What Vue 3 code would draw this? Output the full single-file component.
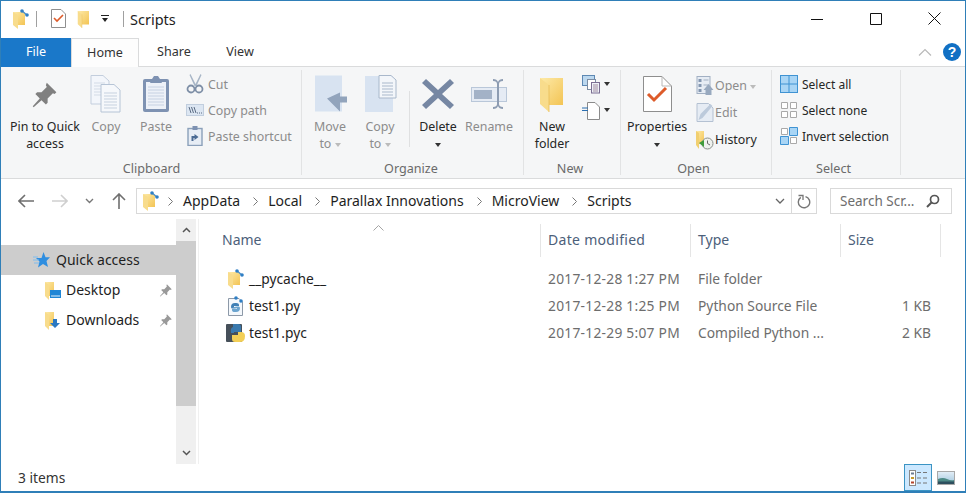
<script setup>
const crumbs = ['AppData', 'Local', 'Parallax Innovations', 'MicroView', 'Scripts']

const columns = ['Date modified', 'Type', 'Size']

const files = [
  { icon: 'folder', name: '__pycache__', date: '2017-12-28 1:27 PM', type: 'File folder', size: '' },
  { icon: 'py', name: 'test1.py', date: '2017-12-28 1:25 PM', type: 'Python Source File', size: '1 KB' },
  { icon: 'pyc', name: 'test1.pyc', date: '2017-12-29 5:07 PM', type: 'Compiled Python ...', size: '2 KB' }
]
</script>

<template>
  <div class="window">
    <svg class="defs" width="0" height="0">
      <defs>
        <linearGradient id="fold" x1="0" y1="0" x2="1" y2="1">
          <stop offset="0" stop-color="#fdeaa8" />
          <stop offset="1" stop-color="#f3c454" />
        </linearGradient>
        <linearGradient id="sky" x1="0" y1="0" x2="0" y2="1">
          <stop offset="0" stop-color="#e4eff7" />
          <stop offset="1" stop-color="#9cc3dc" />
        </linearGradient>
        <symbol id="folder" viewBox="0 0 24 36">
          <path d="M0 2H23V29H9Z" fill="url(#fold)" />
          <path d="M0 2L9 9V36L0 28Z" fill="#f8dc8c" />
          <path d="M9 9V36" stroke="#e9bd55" stroke-width=".8" />
        </symbol>
        <symbol id="qa-folder" viewBox="0 0 18 20">
          <path d="M1 3H13V16H6Z" fill="url(#fold)" />
          <path d="M1 3L6 6V20L1 16Z" fill="#f8dc8c" />
          <path d="M9.500 1.500L15.500 6.500" stroke="#4f93cc" stroke-width="1.500" />
          <circle cx="10" cy="2" r="1.800" fill="#2f7fc4" />
          <circle cx="15" cy="6" r="1.800" fill="#2f7fc4" />
        </symbol>
      </defs>
    </svg>

    <div class="titlebar">
      <svg class="t-folder" width="18" height="20" viewBox="0 0 18 20"><use href="#qa-folder" /></svg>
      <span class="t-sep first"></span>
      <svg class="t-check" width="15" height="19" viewBox="0 0 15 19">
        <path d="M.5.5H10L14.500 5V18.500H.5Z" fill="#fff" stroke="#8f8f8f" />
        <path d="M3 9l3 3 6-6" fill="none" stroke="#dd5b2a" stroke-width="1.600" />
      </svg>
      <svg class="t-small-folder" width="13" height="18" viewBox="0 0 24 36"><use href="#folder" /></svg>
      <svg class="t-drop" width="8" height="7" viewBox="0 0 8 7">
        <path d="M0 0H8V1H0ZM1 3H7L4 7Z" fill="#222" />
      </svg>
      <span class="t-sep"></span>
      <span class="t-title">Scripts</span>
      <div class="controls">
        <svg width="12" height="12" viewBox="0 0 12 12"><path d="M0 6.500H12" stroke="#111" /></svg>
        <svg width="12" height="12" viewBox="0 0 12 12"><path d="M.5.5H11.500V11.500H.5Z" fill="none" stroke="#111" /></svg>
        <svg width="13" height="13" viewBox="0 0 13 13"><path d="M.5.5L12.500 12.500M12.500.5L.5 12.500" stroke="#111" /></svg>
      </div>
    </div>

    <div class="tabs">
      <div class="tab file">File</div>
      <div class="tab active">Home</div>
      <div class="tab share">Share</div>
      <div class="tab view-tab">View</div>
      <svg class="collapse" width="14" height="8" viewBox="0 0 14 8">
        <path d="M1 7.500L7 1.500 13 7.500" fill="none" stroke="#b9b9b9" stroke-width="1.200" />
      </svg>
      <div class="help">?</div>
    </div>

    <div class="ribbon">
      <section class="group clipboard">
        <div class="tools">
          <div class="big pin">
            <svg class="ico" width="28" height="32" viewBox="0 0 32 32">
              <path d="M18 3l11 11-2 2-2-1-6 6 0 5-2 2-5-5-9 8-1-1 8-9-5-5 2-2 5 0 6-6-1-2z" fill="#808080" />
            </svg>
            <span class="dark">Pin to Quick<br />access</span>
          </div>
          <div class="big copy">
            <svg class="ico" width="32" height="38" viewBox="0 0 32 38">
              <path d="M1 .5H13L19 6V29H1Z" fill="#f3f6fb" stroke="#c3cedd" />
              <path d="M4 8H15M4 11H15M4 14H15M4 17H15M4 20H15" stroke="#d3dbe6" />
              <path d="M11 9.500H24L30 15V37H11Z" fill="#f6f8fb" stroke="#b6c4d6" />
              <path d="M14 18H27M14 21H27M14 24H27M14 27H27M14 30H27M14 33H27" stroke="#c6d1df" />
            </svg>
            <span>Copy</span>
          </div>
          <div class="big paste">
            <svg class="ico" width="28" height="38" viewBox="0 0 28 38">
              <rect x="1" y="4" width="26" height="33" rx="2" fill="#7e92b2" />
              <rect x="4" y="7" width="20" height="27" fill="#edf1f8" />
              <path d="M6 12H22M6 15H22M6 18H22M6 21H22M6 24H22M6 27H22M6 30H22" stroke="#c6d1e2" />
              <path d="M10 4L12 1H16L18 4 20 8H8Z" fill="#7e92b2" />
            </svg>
            <span>Paste</span>
          </div>
          <div class="list">
            <div class="row">
              <svg width="17" height="20" viewBox="0 0 17 20">
                <path d="M4 0L9 10 14 0 15 1 10 12 8 12 3 1Z" fill="#a7b5c6" />
                <circle cx="4.500" cy="15" r="3.500" fill="none" stroke="#7d8ea6" stroke-width="1.800" />
                <circle cx="12.500" cy="15" r="3.500" fill="none" stroke="#7d8ea6" stroke-width="1.800" />
              </svg>
              <span>Cut</span>
            </div>
            <div class="row">
              <svg width="18" height="12" viewBox="0 0 18 12">
                <rect x=".5" y=".5" width="17" height="11" fill="#dce6f2" stroke="#c1cede" />
                <path d="M3 3L5 9M5.500 3L7.500 9M8 3L10 9" stroke="#5a6b83" fill="none" />
                <path d="M11 9H12M13 9H14M15 9H16" stroke="#5a6b83" />
              </svg>
              <span>Copy path</span>
            </div>
            <div class="row">
              <svg width="15" height="20" viewBox="0 0 15 20">
                <rect x=".5" y="2.500" width="14" height="17" fill="#e7edf5" stroke="#8ba0ba" stroke-width="1.400" />
                <rect x="5" y="0" width="5" height="4" fill="#7e92b2" />
                <path d="M4 15V10H7V8L11 11 7 14V12H6V15Z" fill="#4a6a94" />
              </svg>
              <span>Paste shortcut</span>
            </div>
          </div>
        </div>
        <div class="label">Clipboard</div>
      </section>

      <section class="group organize">
        <div class="tools">
          <div class="big move">
            <svg class="ico" width="33" height="37" viewBox="0 0 33 37">
              <rect x="1" y="0" width="27" height="36" fill="#d8e3f1" />
              <path d="M13 23L26 17V21H33V27H26V36Z" fill="#92a4bc" />
            </svg>
            <span>Move<br />to <i class="caret light"></i></span>
          </div>
          <div class="big copy-to">
            <svg class="ico" width="33" height="38" viewBox="0 0 33 38">
              <rect x="1" y="1" width="28" height="36" fill="#d8e3f1" />
              <path d="M15 .5H27L32 5V23H15Z" fill="#f3f6fa" stroke="#a9b8cb" />
              <path d="M18 8H29M18 11H29M18 14H29M18 17H29M18 20H29" stroke="#a9b8cb" />
            </svg>
            <span>Copy<br />to <i class="caret light"></i></span>
          </div>
          <span class="inner-sep"></span>
          <div class="big delete">
            <svg class="ico" width="32" height="32" viewBox="0 0 32 32">
              <path d="M4 1L16 12 28 1 32 5 20 16 32 27 28 31 16 20 4 31 0 27 12 16 0 5Z" fill="#7687a3" />
            </svg>
            <span class="dark">Delete<br /><i class="caret"></i></span>
          </div>
          <div class="big rename">
            <svg class="ico" width="36" height="32" viewBox="0 0 36 32">
              <rect x=".5" y="9.500" width="35" height="14" fill="#e5ebf4" stroke="#b9c7d9" />
              <rect x="3" y="12" width="18" height="9" fill="#a3b2c7" />
              <path d="M22 1Q26 1 27 4 28 1 32 1V3Q28 3 28 6V26Q28 29 32 29V31Q28 31 27 28 26 31 22 31V29Q26 29 26 26V6Q26 3 22 3Z" fill="#8d9cb2" />
            </svg>
            <span>Rename</span>
          </div>
        </div>
        <div class="label">Organize</div>
      </section>

      <section class="group new">
        <div class="tools">
          <div class="big new-folder">
            <svg class="ico" width="24" height="36" viewBox="0 0 24 36"><use href="#folder" /></svg>
            <span class="dark">New<br />folder</span>
          </div>
          <div class="mini">
            <div class="mini-row">
              <svg width="19" height="19" viewBox="0 0 19 19">
                <rect x=".5" y=".5" width="12" height="10" fill="#bcd8ef" stroke="#5d88b3" />
                <rect x="5.500" y="4.500" width="8" height="10" fill="#fff" stroke="#7c8da3" />
                <rect x="9.500" y="7.500" width="8" height="10.500" fill="#eef2f8" stroke="#7c6f93" />
                <path d="M11 10H16M11 12H16M11 14H16M11 16H16" stroke="#a08b9f" />
              </svg>
              <i class="caret"></i>
            </div>
            <div class="mini-row">
              <svg width="19" height="19" viewBox="0 0 19 19">
                <path d="M5.500 1.500H13L17.500 6V18.500H5.500Z" fill="#fff" stroke="#8b8b8b" />
                <path d="M0 7H6M0 9.500H6" stroke="#2b6fb0" />
              </svg>
              <i class="caret"></i>
            </div>
          </div>
        </div>
        <div class="label">New</div>
      </section>

      <section class="group open">
        <div class="tools">
          <div class="big properties">
            <svg class="ico" width="29" height="36" viewBox="0 0 29 36">
              <path d="M.5.5H19L28.500 10V35.500H.5Z" fill="#fff" stroke="#8e8e8e" />
              <path d="M19 .5V10H28.500" fill="none" stroke="#b8b8b8" />
              <path d="M5 18L11 24 23 12" fill="none" stroke="#dd5b2a" stroke-width="3" />
            </svg>
            <span class="dark">Properties<br /><i class="caret"></i></span>
          </div>
          <div class="list">
            <div class="row">
              <svg width="17" height="19" viewBox="0 0 17 19">
                <rect x=".5" y=".5" width="13" height="17" fill="#e6ecf4" stroke="#a2b0c3" />
                <path d="M2 3H5V6H2ZM2 8H5V11H2ZM2 13H5V16H2Z" fill="#8497b1" />
                <path d="M7 4H12M7 9H12" stroke="#a2b0c3" />
                <path d="M7 14L12 8 17 14H15V19H9V14Z" fill="#98a9bf" />
              </svg>
              <span>Open <i class="caret light"></i></span>
            </div>
            <div class="row">
              <svg width="17" height="19" viewBox="0 0 17 19">
                <path d="M.5.5H12L16.500 5V18.500H.5Z" fill="#e6ecf4" stroke="#b4c1d2" />
                <path d="M2 17L4 11 14 1 16 3 6 15Z" fill="#bccadb" />
              </svg>
              <span>Edit</span>
            </div>
            <div class="row">
              <svg width="18" height="20" viewBox="0 0 18 20">
                <path d="M0 1H8V14H3Z" fill="url(#fold)" />
                <path d="M0 1L3 3V19L0 15Z" fill="#f1cf70" />
                <circle cx="11.500" cy="13.500" r="5.500" fill="#eef1ee" stroke="#8a8f8a" />
                <path d="M11.500 10.500V13.500L14 15" fill="none" stroke="#666" />
                <path d="M3 13L8 10V17Z" fill="#3f9b3c" />
              </svg>
              <span class="dark">History</span>
            </div>
          </div>
        </div>
        <div class="label">Open</div>
      </section>

      <section class="group select">
        <div class="tools">
          <div class="list">
            <div class="row">
              <svg width="18" height="18" viewBox="0 0 18 18">
                <rect x=".5" y=".5" width="17" height="17" fill="#a9d5f5" stroke="#3f93d3" />
                <path d="M9 0V18M0 9H18" stroke="#3f93d3" />
              </svg>
              <span class="dark">Select all</span>
            </div>
            <div class="row">
              <svg width="18" height="18" viewBox="0 0 18 18">
                <path d="M1.500 1.500H7.500V7.500H1.500ZM10.500 1.500H16.500V7.500H10.500ZM1.500 10.500H7.500V16.500H1.500ZM10.500 10.500H16.500V16.500H10.500Z" fill="#fff" stroke="#a9a9a9" />
              </svg>
              <span class="dark">Select none</span>
            </div>
            <div class="row">
              <svg width="18" height="18" viewBox="0 0 18 18">
                <path d="M1.500 1.500H7.500V7.500H1.500ZM10.500 10.500H16.500V16.500H10.500Z" fill="#fff" stroke="#a9a9a9" />
                <path d="M9.500.5H17.500V8.500H9.500ZM.5 9.500H8.500V17.500H.5Z" fill="#a9d5f5" stroke="#3f93d3" />
              </svg>
              <span class="dark">Invert selection</span>
            </div>
          </div>
        </div>
        <div class="label">Select</div>
      </section>
    </div>

    <div class="navbar">
      <div class="arrows">
        <svg width="16" height="14" viewBox="0 0 16 14"><path d="M7 1L1 7 7 13M1 7H16" fill="none" stroke="#6f6f6f" stroke-width="1.600" /></svg>
        <svg width="16" height="14" viewBox="0 0 16 14"><path d="M9 1L15 7 9 13M15 7H0" fill="none" stroke="#cfcfcf" stroke-width="1.600" /></svg>
        <svg width="9" height="6" viewBox="0 0 9 6"><path d="M1 1L4.500 4.500 8 1" fill="none" stroke="#777" stroke-width="1.400" /></svg>
        <svg width="14" height="16" viewBox="0 0 14 16"><path d="M1 7L7 1 13 7M7 1V16" fill="none" stroke="#6f6f6f" stroke-width="1.600" /></svg>
      </div>
      <div class="address">
        <svg class="crumb-icon" width="18" height="20" viewBox="0 0 18 20"><use href="#qa-folder" /></svg>
        <template v-for="c in crumbs" :key="c">
          <svg class="chev" width="5" height="9" viewBox="0 0 5 9"><path d="M.5.5L4.500 4.500 .5 8.500" fill="none" stroke="#777" /></svg>
          <span class="crumb">{{ c }}</span>
        </template>
        <svg class="addr-drop" width="10" height="6" viewBox="0 0 10 6"><path d="M1 1L5 5 9 1" fill="none" stroke="#666" stroke-width="1.300" /></svg>
        <div class="refresh">
          <svg width="14" height="15" viewBox="0 0 14 15">
            <path d="M8.500 2.600A5.700 5.700 0 1 1 3.800 3.400" fill="none" stroke="#777" stroke-width="1.400" />
            <path d="M1.500 1.500H6V6" fill="none" stroke="#777" stroke-width="1.300" />
          </svg>
        </div>
      </div>
      <div class="search">
        <span>Search Scr...</span>
        <svg width="14" height="14" viewBox="0 0 14 14">
          <circle cx="8.500" cy="5.500" r="4" fill="none" stroke="#555" stroke-width="1.700" />
          <path d="M5.500 8.500L1 13" stroke="#555" stroke-width="2" />
        </svg>
      </div>
    </div>

    <div class="main">
      <aside class="sidebar">
        <div class="tree">
          <div class="node selected">
            <svg width="17" height="16" viewBox="0 0 17 16">
              <path d="M10.500 0L12.500 5.200H17L13.500 9 15 15 10 12 5 15.500 6.500 9.500 3 6H8.500Z" fill="#2f8ee0" />
              <path d="M0 5H5M0 8H6M1 11H6" stroke="#7fbcee" />
            </svg>
            <span>Quick access</span>
          </div>
          <div class="node sub">
            <svg width="17" height="19" viewBox="0 0 17 19">
              <path d="M1 1H10V15H5Z" fill="url(#fold)" />
              <path d="M1 1L5 4V19L1 15Z" fill="#f8dc8c" />
              <rect x="6" y="9" width="11" height="8" fill="#1f86d6" />
              <path d="M7 15H16" stroke="#e4f1fb" />
            </svg>
            <span>Desktop</span>
            <svg class="pinned" width="14" height="14" viewBox="0 0 32 32">
              <path d="M18 3l11 11-2 2-2-1-6 6 0 5-2 2-5-5-9 8-1-1 8-9-5-5 2-2 5 0 6-6-1-2z" fill="#999" />
            </svg>
          </div>
          <div class="node sub">
            <svg width="17" height="19" viewBox="0 0 17 19">
              <path d="M1 1H10V15H5Z" fill="url(#fold)" />
              <path d="M1 1L5 4V19L1 15Z" fill="#f8dc8c" />
              <path d="M9 8H13V12H16L11 17 6 12H9Z" fill="#2b78c2" />
            </svg>
            <span>Downloads</span>
            <svg class="pinned" width="14" height="14" viewBox="0 0 32 32">
              <path d="M18 3l11 11-2 2-2-1-6 6 0 5-2 2-5-5-9 8-1-1 8-9-5-5 2-2 5 0 6-6-1-2z" fill="#999" />
            </svg>
          </div>
        </div>
        <div class="scrollbar">
          <div class="sb-btn">
            <svg width="9" height="6" viewBox="0 0 9 6"><path d="M1 5L4.500 1.500 8 5" fill="none" stroke="#555" stroke-width="1.500" /></svg>
          </div>
          <div class="thumb"></div>
          <div class="track"></div>
          <div class="sb-btn">
            <svg width="9" height="6" viewBox="0 0 9 6"><path d="M1 1L4.500 4.500 8 1" fill="none" stroke="#555" stroke-width="1.500" /></svg>
          </div>
        </div>
      </aside>

      <div class="content">
        <div class="header">
          <div class="col-name">
            Name
            <svg class="sort" width="11" height="6" viewBox="0 0 11 6"><path d="M.5 5.500L5.500 .5 10.500 5.500" fill="none" stroke="#a5a5a5" /></svg>
          </div>
          <div v-for="c in columns" :key="c" class="col">{{ c }}</div>
        </div>
        <div class="rows">
          <div v-for="f in files" :key="f.name" class="file-row">
            <div class="cell-name">
              <svg v-if="f.icon === 'folder'" width="18" height="20" viewBox="0 0 18 20"><use href="#qa-folder" /></svg>
              <svg v-else-if="f.icon === 'py'" width="18" height="20" viewBox="0 0 18 20">
                <path d="M1.500 2.500H12L15.500 6V19.500H1.500Z" fill="#f4f8fc" stroke="#8d99a8" />
                <path d="M4 11Q4 7 8 7 12 6.500 12 9V10H7V11H12Q9 13 6 12.500 4 13 4 11Z" fill="#3f7fb5" />
                <path d="M13 12Q13 16 9 16 5 16.500 5 14V13H10V12H5Q8 10 11 10.500 13 10 13 12Z" fill="#6ba4cf" />
                <circle cx="9" cy="2" r="1.800" fill="#2f7fc4" />
                <circle cx="14" cy="5" r="1.800" fill="#2f7fc4" />
              </svg>
              <svg v-else width="20" height="20" viewBox="0 0 20 20">
                <rect x="0" y="1" width="16" height="18" rx="1" fill="#46505a" />
                <path d="M7 1H12Q15 1 15 4V9H8V10H5Q4 5 7 4Z" fill="#3a79ad" />
                <path d="M6 12H12V9H15Q19 9 19 13 19 19 14 19H9Q6 19 6 16Z" fill="#f3cf56" />
              </svg>
              <span>{{ f.name }}</span>
            </div>
            <div class="cell date">{{ f.date }}</div>
            <div class="cell type">{{ f.type }}</div>
            <div class="cell size">{{ f.size }}</div>
          </div>
        </div>
      </div>
    </div>

    <div class="status">
      <span>3 items</span>
      <div class="views">
        <div class="view on">
          <svg width="18" height="16" viewBox="0 0 18 16">
            <rect x=".5" y=".5" width="6" height="15" fill="#fff" stroke="#8a8a8a" />
            <path d="M2 2.500H5V4.500H2Z" fill="#6c7c92" />
            <path d="M2 7H5V9H2Z" fill="#c49a2c" />
            <path d="M2 11.500H5V13.500H2Z" fill="#b4442c" />
            <path d="M8 2.500H12M14 2.500H18M8 8H12M14 8H18M8 13H12M14 13H18" stroke="#777" />
          </svg>
        </div>
        <div class="view">
          <svg width="18" height="14" viewBox="0 0 18 14">
            <rect x=".5" y=".5" width="17" height="13" fill="url(#sky)" stroke="#a8a8a8" />
            <path d="M1 8Q6 6 10 8T17 9V13H1Z" fill="#4d8a86" />
            <path d="M1 10.500H17V13H1Z" fill="#2d4f5e" />
          </svg>
        </div>
      </div>
    </div>
  </div>
</template>

<style>
html,
body {
  margin: 0;
  background: #fff;
}
</style>

<style scoped>
.window {
  width: 966px;
  height: 493px;
  box-sizing: border-box;
  border: 1px solid #2f7fb8;
  border-bottom-width: 2px;
  display: flex;
  flex-direction: column;
  overflow: hidden;
  background: #fff;
  font-family: "Noto Sans", sans-serif;
  font-size: 13.8px;
  color: #1e1e1e;
}
.defs {
  position: absolute;
}

/* title bar */
.titlebar {
  height: 37px;
  flex: none;
  display: flex;
  align-items: center;
  box-sizing: border-box;
  padding-bottom: 2px;
}
.t-folder {
  margin-left: 11px;
}
.t-sep {
  width: 1px;
  height: 16px;
  background: #a0a0a0;
  margin-left: 14px;
}
.t-sep.first {
  margin-left: 6px;
  margin-right: 14px;
}
.t-small-folder {
  margin-left: 11px;
}
.t-drop {
  margin-left: 11px;
}
.t-title {
  margin-left: 6px;
  font-size: 14.5px;
}
.controls {
  margin-left: auto;
  width: 130px;
  margin-right: 24px;
  display: flex;
  justify-content: space-between;
  align-items: center;
}

/* tabs */
.tabs {
  height: 29px;
  flex: none;
  display: flex;
  align-items: stretch;
  box-sizing: border-box;
  border-bottom: 1px solid #dadbdc;
}
.tab {
  width: 68px;
  display: flex;
  align-items: center;
  justify-content: center;
  box-sizing: border-box;
  padding-bottom: 2px;
  color: #333;
  font-size: 12.6px;
}
.tab.share {
  width: 70px;
}
.tab.view-tab {
  width: 62px;
}
.tab.file {
  width: 70px;
  background: #1a78c9;
  color: #fff;
  margin-bottom: -1px;
}
.tab.active {
  background: #fdfdfd;
  border: 1px solid #dadbdc;
  border-bottom: none;
  margin-bottom: -1px;
}
.collapse {
  margin-left: auto;
  align-self: center;
}
.help {
  align-self: center;
  width: 18px;
  height: 18px;
  margin: 0 4px 0 11px;
  border-radius: 50%;
  background: #1170c4;
  color: #fff;
  font: bold 14px/18px "Liberation Sans", sans-serif;
  text-align: center;
}

/* ribbon */
.ribbon {
  height: 112px;
  flex: none;
  box-sizing: border-box;
  display: flex;
  background: #f5f6f7;
  border-bottom: 1px solid #dadbdc;
  color: #8c8c8c;
  line-height: 17px;
  font-size: 12.4px;
}
.group {
  box-sizing: border-box;
  padding: 3px 0 0;
  display: flex;
  flex-direction: column;
  position: relative;
}
.group::after {
  content: "";
  position: absolute;
  right: 0;
  top: 3px;
  bottom: 3px;
  width: 1px;
  background: #e2e3e4;
}
.clipboard {
  width: 301px;
}
.organize {
  width: 222px;
}
.new {
  width: 97px;
}
.open {
  width: 151px;
}
.select {
  width: 129px;
}
.tools {
  flex: 1;
  display: flex;
}
.label {
  text-align: center;
  color: #6a6a6a;
  height: 19px;
  line-height: 19px;
  font-size: 12.6px;
}
.organize .label {
  padding-right: 4px;
}
.new .label {
  padding-right: 5px;
}
.open .label {
  padding-right: 6px;
}
.select .label {
  padding-right: 6px;
}
.big {
  display: flex;
  flex-direction: column;
  align-items: center;
  text-align: center;
  flex: none;
}
.ico {
  height: 38px;
  margin: 5px 0 5px;
  flex: none;
}
.dark {
  color: #262626;
}
.pin {
  width: 88px;
}
.copy {
  width: 34px;
}
.paste {
  width: 50px;
  margin-left: 8px;
}
.clipboard .list {
  margin-left: 5px;
}
.clipboard .row {
  gap: 4px;
}
.list {
  display: flex;
  flex-direction: column;
  padding-top: 1px;
}
.row {
  height: 26px;
  display: flex;
  align-items: center;
  gap: 5px;
  white-space: nowrap;
}
.row svg {
  flex: none;
  width: 18px;
}
.organize .tools {
  padding-left: 3px;
}
.move {
  width: 50px;
}
.copy-to {
  width: 50px;
}
.inner-sep {
  width: 1px;
  height: 56px;
  margin: 21px 3px 0 4px;
  background: #dfe0e1;
}
.delete {
  width: 50px;
}
.rename {
  width: 52px;
}
.new .tools {
  padding-left: 2px;
}
.new-folder {
  width: 52px;
}
.mini {
  margin-left: 4px;
  padding-top: 1px;
}
.mini-row {
  height: 26px;
  display: flex;
  align-items: center;
  gap: 3px;
}
.properties {
  width: 72px;
}
.open .list {
  margin-left: 3px;
  padding-top: 2px;
}
.open .list .row {
  gap: 1px;
  height: 27px;
}
.select .list {
  margin-left: 8px;
  font-size: 12px;
}
.select .row {
  gap: 4px;
}
.caret {
  display: inline-block;
  width: 0;
  height: 0;
  vertical-align: middle;
  border: 3.5px solid transparent;
  border-top: 4px solid #333;
  border-bottom: none;
}
.caret.light {
  border-top-color: #bbb;
}

/* address row */
.navbar {
  height: 40px;
  flex: none;
  display: flex;
  align-items: center;
  padding-top: 4px;
  box-sizing: border-box;
}
.arrows {
  width: 135px;
  box-sizing: border-box;
  padding: 0 10px 0 17px;
  display: flex;
  justify-content: space-between;
  align-items: center;
}
.address {
  width: 681px;
  height: 26px;
  box-sizing: border-box;
  border: 1px solid #d9d9d9;
  display: flex;
  align-items: center;
  padding-left: 5px;
  font-size: 14px;
}
.crumb-icon {
  margin-right: 5px;
}
.chev {
  margin: 0 10px 0 3px;
}
.crumb {
  margin-right: 10px;
  padding-bottom: 2px;
}
.addr-drop {
  margin-left: auto;
  margin-right: 6px;
}
.refresh {
  width: 24px;
  height: 100%;
  border-left: 1px solid #d9d9d9;
  display: flex;
  align-items: center;
  justify-content: center;
}
.search {
  width: 122px;
  height: 26px;
  margin-left: 13px;
  box-sizing: border-box;
  border: 1px solid #d9d9d9;
  display: flex;
  align-items: center;
  justify-content: space-between;
  padding: 0 11px 0 9px;
  color: #6d6d6d;
  font-size: 13.5px;
}

/* sidebar */
.main {
  flex: 1;
  display: flex;
  min-height: 0;
}
.sidebar {
  width: 198px;
  flex: none;
  box-sizing: border-box;
  display: flex;
  border-right: 1px solid #f0f0f0;
}
.tree {
  width: 175px;
  flex: none;
  padding-top: 26px;
}
.node {
  height: 30px;
  display: flex;
  align-items: center;
  font-size: 14px;
  padding-left: 32px;
  gap: 6px;
}
.node span {
  padding-bottom: 2px;
}
.node.selected {
  background: #cdcdcd;
}
.node.sub {
  padding-left: 43px;
  gap: 5px;
}
.pinned {
  margin-left: auto;
  margin-right: 3px;
}
.scrollbar {
  width: 20px;
  display: flex;
  flex-direction: column;
  background: #f0f0f0;
}
.sb-btn {
  height: 22px;
  flex: none;
  display: flex;
  align-items: center;
  justify-content: center;
}
.thumb {
  height: 165px;
  flex: none;
  background: #cdcdcd;
}
.track {
  flex: 1;
}

/* file list */
.content {
  flex: 1;
  min-width: 0;
}
.header {
  height: 33px;
  margin-top: 5px;
  display: flex;
  color: #4c607a;
  font-size: 14px;
}
.col-name {
  width: 341px;
  box-sizing: border-box;
  padding-left: 23px;
  line-height: 31px;
  position: relative;
}
.sort {
  position: absolute;
  left: 174px;
  top: 1px;
}
.col {
  width: 150px;
  box-sizing: border-box;
  border-left: 1px solid #e5e5e5;
  padding-left: 7px;
  line-height: 31px;
}
.col:nth-child(2) {
  letter-spacing: .3px;
}
.col:last-child {
  width: 101px;
  border-right: 1px solid #e5e5e5;
}
.rows {
  padding-top: 8px;
}
.file-row {
  height: 27px;
  display: flex;
  align-items: center;
  color: #6d6d6d;
}
.cell-name {
  width: 342px;
  flex: none;
  box-sizing: border-box;
  padding-left: 27px;
  display: flex;
  align-items: center;
  color: #1e1e1e;
}
.cell-name svg {
  width: 20px;
  margin-right: 3px;
  flex: none;
}
.cell {
  width: 150px;
  flex: none;
  box-sizing: border-box;
  padding-left: 7px;
  white-space: nowrap;
}
.cell.date {
  letter-spacing: .25px;
}
.cell.size {
  width: 99px;
  text-align: right;
  padding-right: 9px;
}

/* status bar */
.status {
  height: 27px;
  flex: none;
  display: flex;
  align-items: center;
  padding-left: 17px;
  color: #333;
}
.views {
  margin-left: auto;
  margin-right: 5px;
  display: flex;
  align-self: stretch;
  align-items: stretch;
}
.view {
  width: 28px;
  box-sizing: border-box;
  display: flex;
  align-items: center;
  justify-content: center;
}
.view.on {
  background: #cce8ff;
  border: 1px solid #3b94c4;
}
</style>
